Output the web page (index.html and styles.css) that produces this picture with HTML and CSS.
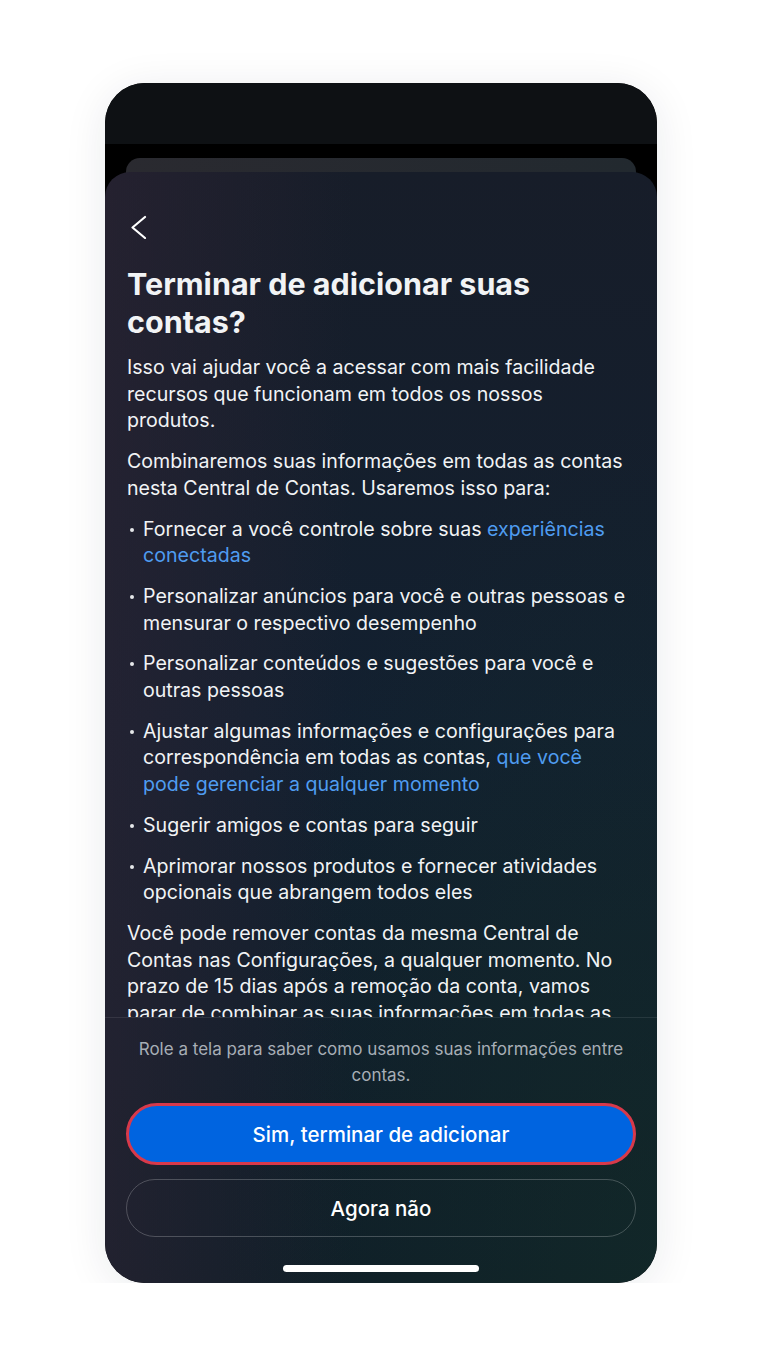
FILE: index.html
```html
<!doctype html>
<html lang="pt-BR">
<head>
  <meta charset="utf-8">
  <meta name="viewport" content="width=device-width, initial-scale=1">
  <title>Central de Contas</title>
  <link rel="stylesheet" href="styles.css">
</head>
<body>
  <div class="phone">
    <div class="status-bar"></div>

    <div class="sheets">
      <div class="sheet-behind"></div>

      <div class="sheet">
        <div class="sheet-nav">
          <button type="button" class="back-btn" aria-label="Voltar">
            <svg width="24" height="24" viewBox="0 0 24 24">
              <path d="M18 2 L5.5 12.5 L18 23" fill="none" stroke="#fff" stroke-width="2.2" stroke-linecap="round" stroke-linejoin="round"/>
            </svg>
          </button>
        </div>

        <div class="sheet-body">
          <h1 class="title">Terminar de adicionar suas contas?</h1>
          <p>Isso vai ajudar você a acessar com mais facilidade recursos que funcionam em todos os nossos produtos.</p>
          <p>Combinaremos suas informações em todas as contas nesta Central de Contas. Usaremos isso para:</p>
          <ul class="uses">
            <li>Fornecer a você controle sobre suas <a href="#">experiências conectadas</a></li>
            <li>Personalizar anúncios para você e outras pessoas e mensurar o respectivo desempenho</li>
            <li>Personalizar conteúdos e sugestões para você e outras pessoas</li>
            <li>Ajustar algumas informações e configurações para correspondência em todas as contas, <a href="#">que você pode gerenciar a qualquer momento</a></li>
            <li>Sugerir amigos e contas para seguir</li>
            <li>Aprimorar nossos produtos e fornecer atividades opcionais que abrangem todos eles</li>
          </ul>
          <p>Você pode remover contas da mesma Central de Contas nas Configurações, a qualquer momento. No prazo de 15 dias após a remoção da conta, vamos parar de combinar as suas informações em todas as contas.</p>
        </div>

        <div class="sheet-footer">
          <p class="scroll-hint">Role a tela para saber como usamos suas informações entre contas.</p>
          <div class="actions">
            <button type="button" class="btn btn-primary">Sim, terminar de adicionar</button>
            <button type="button" class="btn btn-outline">Agora não</button>
          </div>
          <div class="home-bar"></div>
        </div>
      </div>
    </div>
  </div>
</body>
</html>
```

FILE: styles.css
```css
body {
  margin: 0;
  background: #fff;
  font-family: "Inter", "Noto Sans", sans-serif;
}

.phone {
  width: 552px;
  height: 1200px;
  margin: 83px 0 0 105px;
  border-radius: 40px;
  overflow: hidden;
  background: #000;
  display: flex;
  flex-direction: column;
  box-shadow: 0 6px 44px rgba(20, 30, 50, 0.09);
}

.status-bar {
  height: 61px;
  background: #0e1114;
  flex-shrink: 0;
}

.sheets {
  flex: 1;
  display: flex;
  flex-direction: column;
  padding-top: 14px;
  min-height: 0;
}

/* the card peeking out behind the current one */
.sheet-behind {
  height: 40px;
  margin: 0 21px;
  border-radius: 14px 14px 0 0;
  background: linear-gradient(to right, #2a2a30, #22292f);
  flex-shrink: 0;
}

.sheet {
  flex: 1;
  margin-top: -26px;
  border-radius: 25px 25px 0 0;
  display: flex;
  flex-direction: column;
  min-height: 0;
  color: #f1f3f5;
  background:
    linear-gradient(to right, rgba(46, 36, 52, 0.6), rgba(30, 30, 45, 0) 45%),
    radial-gradient(ellipse at 100% 100%, rgba(20, 48, 40, 0.5), rgba(20, 48, 40, 0) 55%),
    linear-gradient(to bottom, #171d29, #122030 50%, #0f1e28);
}

.sheet-nav {
  height: 93px;
  flex-shrink: 0;
  padding: 43px 0 0 22px;
  box-sizing: border-box;
}

.back-btn {
  border: 0;
  padding: 0;
  background: none;
  display: block;
  cursor: pointer;
}

.sheet-body {
  flex: 1;
  min-height: 0;
  overflow: hidden;
  padding: 0 26px 0 22px;
  font-size: 19.6px;
  line-height: 26.7px;
}

.title {
  margin: 0 0 13px;
  font-size: 30.5px;
  line-height: 38px;
  font-weight: 700;
}

.sheet-body p {
  margin: 0 0 14px;
}

.sheet-body a {
  color: #4f9cf0;
  text-decoration: none;
}

.uses {
  list-style: none;
  margin: 0;
  padding: 0;
}

.uses li {
  position: relative;
  padding-left: 16px;
  margin-bottom: 14px;
}

.uses li::before {
  content: "";
  position: absolute;
  left: 3px;
  top: 12px;
  width: 4px;
  height: 4px;
  border-radius: 50%;
  background: #e6e8ea;
}

.sheet-footer {
  flex-shrink: 0;
  border-top: 1px solid rgba(255, 255, 255, 0.09);
  padding: 18px 21px 0;
}

.scroll-hint {
  margin: 0;
  text-align: center;
  font-size: 17px;
  line-height: 26px;
  color: #a7aeb6;
}

.actions {
  margin-top: 15px;
  display: flex;
  flex-direction: column;
  gap: 14px;
}

.btn {
  width: 100%;
  border-radius: 31px;
  font-family: inherit;
  font-size: 20.5px;
  font-weight: 500;
  color: #fff;
  cursor: pointer;
}

.btn-primary {
  height: 62px;
  background: #0064e0;
  border: 3px solid #d8394a;
}

.btn-outline {
  height: 58px;
  background: transparent;
  border: 1px solid rgba(255, 255, 255, 0.22);
}

.home-bar {
  width: 196px;
  height: 7px;
  margin: 28px auto 11px;
  border-radius: 4px;
  background: #fff;
}
```
